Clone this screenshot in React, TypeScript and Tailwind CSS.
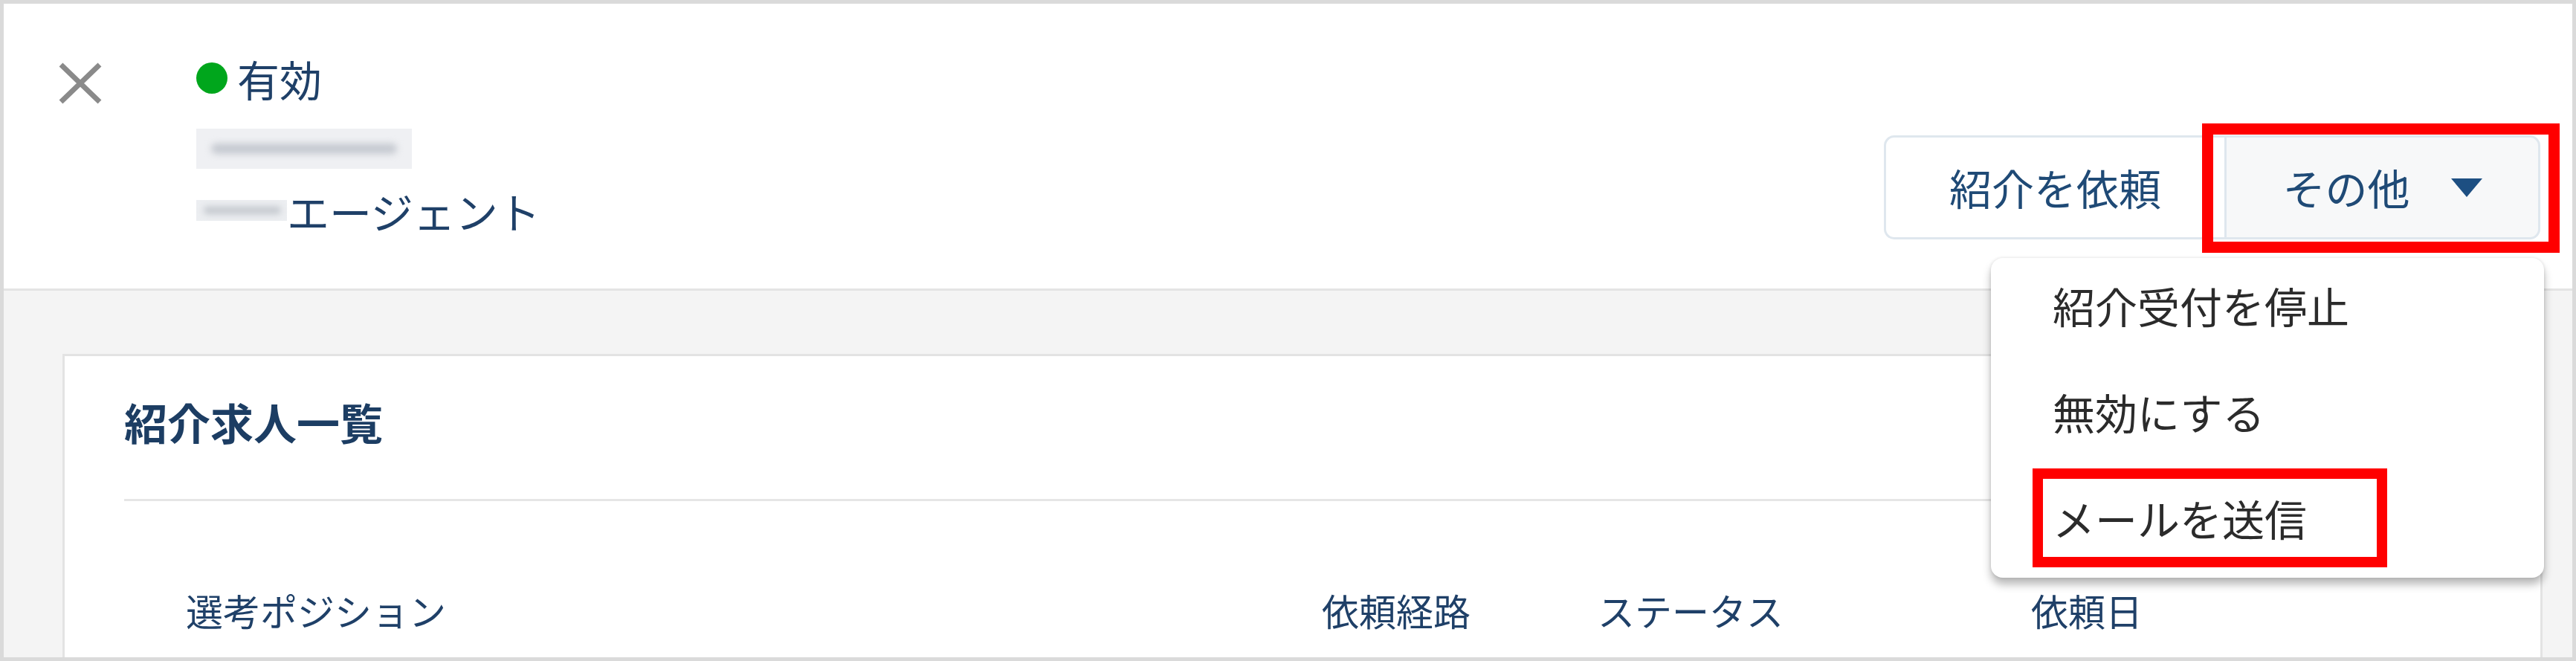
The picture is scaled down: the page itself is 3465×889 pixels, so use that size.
import React from 'react';

const MENU_ITEMS = ['紹介受付を停止', '無効にする', 'メールを送信'];

const COLUMNS = [
  { label: '選考ポジション', width: 'w-[1528px]' },
  { label: '依頼経路', width: 'w-[371px]' },
  { label: 'ステータス', width: 'w-[583px]' },
  { label: '依頼日', width: 'w-[300px]' },
];

const CloseIcon: React.FC = () => (
  <svg width="62" height="58" viewBox="0 0 62 58" className="block">
    <path d="M5 4 L57 54 M57 4 L5 54" stroke="#8a8a8a" strokeWidth="7" strokeLinecap="butt" />
  </svg>
);

const App: React.FC = () => {
  return (
    <div className="w-[3465px] h-[889px] overflow-hidden border-[5px] border-[#dadada] bg-[#f4f4f4] font-['Noto_Sans_CJK_JP',sans-serif] text-[#1f4068]">
      {/* Header */}
      <header className="h-[386px] bg-white border-b-[3px] border-[#e4e4e4] flex items-start pt-[60px] pl-[72px] pr-[43px]">
        <div className="mt-[18px]">
          <CloseIcon />
        </div>

        <div className="ml-[125px] flex flex-col">
          <div className="h-[80px] flex items-center">
            <span className="w-[42px] h-[42px] rounded-full bg-[#00a61c]"></span>
            <span className="ml-[13px] text-[57px] leading-[80px]">有効</span>
          </div>
          {/* masked name */}
          <div className="h-[80px] mt-[15px] flex items-center">
            <div className="w-[290px] h-[54px] bg-[#eff0f3] flex items-center">
              <div className="ml-[20px] w-[250px] h-[14px] rounded-full bg-[#c5c9d0] blur-[5px]"></div>
            </div>
          </div>
          <div className="h-[56px] mt-[15px] flex items-center">
            <div className="w-[122px] h-[28px] bg-[#eceef1] flex items-center">
              <div className="ml-[10px] w-[104px] h-[10px] rounded-full bg-[#c3c7cd] blur-[4px]"></div>
            </div>
            <span className="text-[57px] leading-[56px]">エージェント</span>
          </div>
        </div>

        {/* Button group */}
        <div className="relative ml-auto mt-[117px] flex h-[140px]">
          <button className="w-[458px] h-full rounded-l-[14px] border-[3px] border-r-0 border-[#dfe7ee] bg-white text-[57px] text-[#1f4a76]">
            紹介を依頼
          </button>
          <button className="w-[425px] h-full rounded-r-[14px] border-[3px] border-[#dfe7ee] bg-[#f7f8f9] text-[57px] text-[#1f4a76] flex items-center justify-center">
            <span>その他</span>
            <svg width="42" height="25" viewBox="0 0 42 25" className="ml-[55px]">
              <path d="M0 0 H42 L21 25 Z" fill="#1d4f82" />
            </svg>
          </button>

          {/* annotation around その他 */}
          <div className="absolute left-[428px] top-[-16px] w-[481px] h-[174px] border-[15px] border-[#ff0000] pointer-events-none"></div>

          {/* Dropdown menu */}
          <div className="absolute left-[144px] top-[165px] w-[744px] h-[430px] rounded-[16px] bg-white shadow-[0_9px_12px_rgba(0,0,0,0.28),0_0_4px_rgba(0,0,0,0.12)] pt-[23px] pl-[83px] flex flex-col gap-[63px] z-10">
            {MENU_ITEMS.map((item) => (
              <div key={item} className="h-[80px] leading-[80px] text-[57px] text-[#2b2b2b]">
                {item}
              </div>
            ))}
            <div className="absolute left-[56px] top-[283px] w-[477px] h-[133px] border-[14px] border-[#ff0000]"></div>
          </div>
        </div>
      </header>

      {/* Content */}
      <main className="pt-[85px] pl-[79px] pr-[40px]">
        <section className="h-[600px] bg-white border-[3px] border-[#e3e3e3] px-[80px] pt-[53px]">
          <h2 className="text-[58px] leading-[70px] font-bold text-[#1c3d63]">紹介求人一覧</h2>
          <div className="mt-[69px] h-[3px] bg-[#e6e6e6]"></div>
          <div className="mt-[116px] pl-[83px] flex text-[50px] leading-[60px] text-[#1f4068]">
            {COLUMNS.map((col) => (
              <div key={col.label} className={col.width}>
                {col.label}
              </div>
            ))}
          </div>
        </section>
      </main>
    </div>
  );
};

export default App;
